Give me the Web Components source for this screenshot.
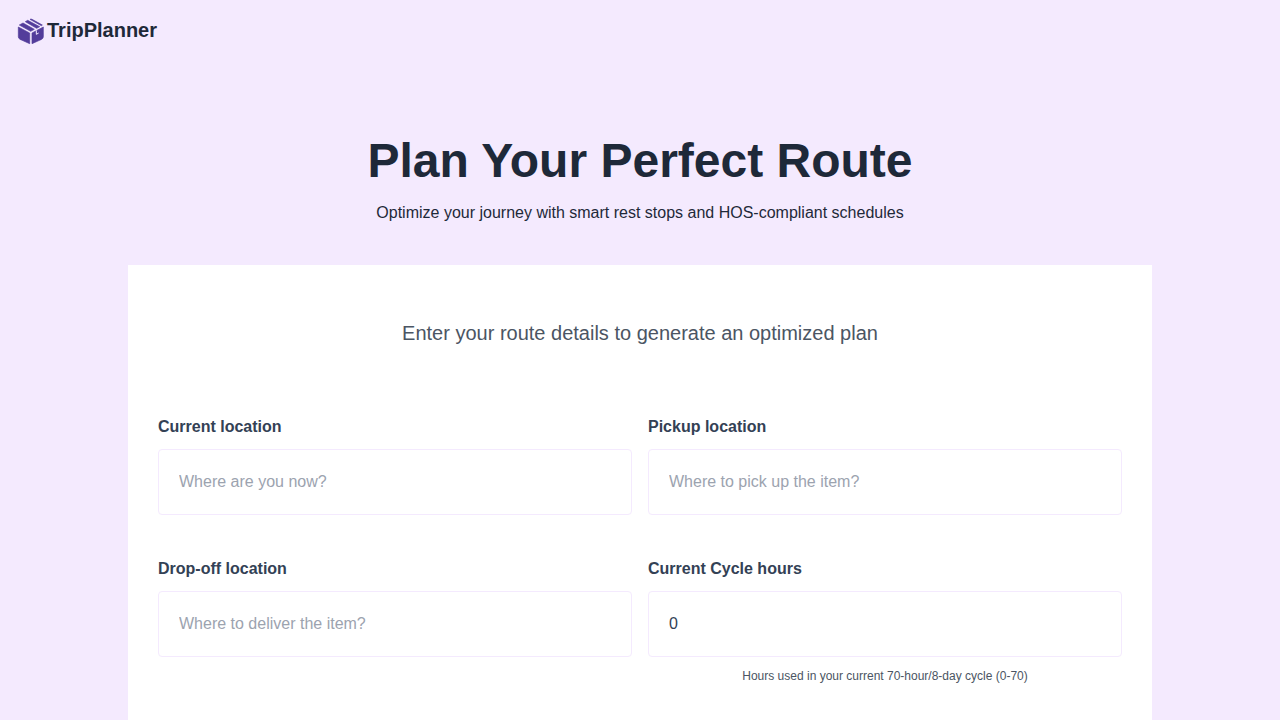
<!DOCTYPE html>
<html lang="en">
<head>
<meta charset="utf-8">
<meta name="viewport" content="width=device-width, initial-scale=1">
<title>TripPlanner</title>
<style>
  body { margin: 0; min-height: 100vh; background: #f4eafe; color: #1e2939; font: 16px/24px "Liberation Sans", Arial, sans-serif; }
</style>
</head>
<body>
<trip-app></trip-app>
<script>
class BoxLogo extends HTMLElement {
  constructor() {
    super();
    this.attachShadow({ mode: "open" }).innerHTML = `
      <style>
        :host { display: block; width: 30px; height: 30px; }
        svg { display: block; width: 100%; height: 100%; }
      </style>
      <svg viewBox="0 0 90 90" aria-hidden="true">
        <g fill="#533d9b" stroke="#533d9b" stroke-width="2" stroke-linejoin="round">
          <path d="M7 33 41 51V83L12 70Q7 67 7 62Z"/>
          <path d="M48 51 82 33V62Q82 67 77 70L48 83Z"/>
          <path d="M10 27 21 21 55 40 44 46Z"/>
          <path d="M28 17 35 13 71 32 62 37Z"/>
          <path d="M42 10Q45 8 48 10L79 27 76 29Z"/>
        </g>
        <path d="M61 43V55L68 51" fill="none" stroke="#f4eafe" stroke-width="3"/>
      </svg>`;
  }
}
customElements.define("box-logo", BoxLogo);

class TripHeader extends HTMLElement {
  constructor() {
    super();
    this.attachShadow({ mode: "open" }).innerHTML = `
      <style>
        :host { display: block; padding: 16px; }
        a { display: inline-flex; align-items: flex-start; gap: 1px; color: inherit; text-decoration: none; font-size: 20px; line-height: 28px; font-weight: 700; }
      </style>
      <a href="#"><box-logo></box-logo><span><slot></slot></span></a>`;
  }
}
customElements.define("trip-header", TripHeader);

class TripHero extends HTMLElement {
  constructor() {
    super();
    this.attachShadow({ mode: "open" }).innerHTML = `
      <style>
        :host { display: block; text-align: center; padding: 68px 16px 40px; }
        h1 { margin: 0 0 16px; font-size: 48px; line-height: 48px; font-weight: 700; }
        p { margin: 0; }
      </style>
      <h1><slot name="title"></slot></h1>
      <p><slot></slot></p>`;
  }
}
customElements.define("trip-hero", TripHero);

class TripField extends HTMLElement {
  connectedCallback() {
    if (this.shadowRoot) return;
    this.attachShadow({ mode: "open" }).innerHTML = `
      <style>
        :host { display: block; min-width: 0; color: #334155; }
        label { display: block; margin-bottom: 10px; font-weight: 700; }
        input { display: block; box-sizing: border-box; width: 100%; margin: 0; padding: 20px; border: 1px solid #f4eafe; border-radius: 4px; background: #fff; color: inherit; font: inherit; height: 66px; appearance: textfield; }
        input:focus { outline: 2px solid #533d9b; }
        input::placeholder { color: #9ca3af; opacity: 1; }
        ::slotted(*) { display: block; margin-top: 11px; font-size: 12px; line-height: 16px; text-align: center; color: #4b5563; }
      </style>
      <label for="control"></label>
      <input id="control">
      <slot></slot>`;
    this.shadowRoot.querySelector("label").textContent = this.getAttribute("label");
    const input = this.shadowRoot.querySelector("input");
    input.type = this.getAttribute("type") || "text";
    for (const name of ["placeholder", "value", "min", "max"]) {
      if (this.hasAttribute(name)) input.setAttribute(name, this.getAttribute(name));
    }
  }
}
customElements.define("trip-field", TripField);

class RouteCard extends HTMLElement {
  constructor() {
    super();
    this.attachShadow({ mode: "open" }).innerHTML = `
      <style>
        :host { display: block; box-sizing: border-box; width: 80%; margin: 0 auto; padding: 54px 30px 40px; background: #fff; }
        p { margin: 0 0 68px; text-align: center; font-size: 20px; line-height: 28px; color: #4b5563; }
        form { display: grid; grid-template-columns: repeat(2, minmax(0, 1fr)); gap: 42px 16px; }
        @media (max-width: 640px) { form { grid-template-columns: 1fr; } }
      </style>
      <p><slot></slot></p>
      <form>
        <trip-field label="Current location" placeholder="Where are you now?"></trip-field>
        <trip-field label="Pickup location" placeholder="Where to pick up the item?"></trip-field>
        <trip-field label="Drop-off location" placeholder="Where to deliver the item?"></trip-field>
        <trip-field label="Current Cycle hours" type="number" value="0" min="0" max="70">
          <small>Hours used in your current 70-hour/8-day cycle (0-70)</small>
        </trip-field>
      </form>`;
  }
}
customElements.define("route-card", RouteCard);

class TripApp extends HTMLElement {
  constructor() {
    super();
    this.attachShadow({ mode: "open" }).innerHTML = `
      <style>:host { display: block; }</style>
      <trip-header>TripPlanner</trip-header>
      <main>
        <trip-hero>
          <span slot="title">Plan Your Perfect Route</span>
          Optimize your journey with smart rest stops and HOS-compliant schedules
        </trip-hero>
        <route-card>Enter your route details to generate an optimized plan</route-card>
      </main>`;
  }
}
customElements.define("trip-app", TripApp);
</script>
</body>
</html>
